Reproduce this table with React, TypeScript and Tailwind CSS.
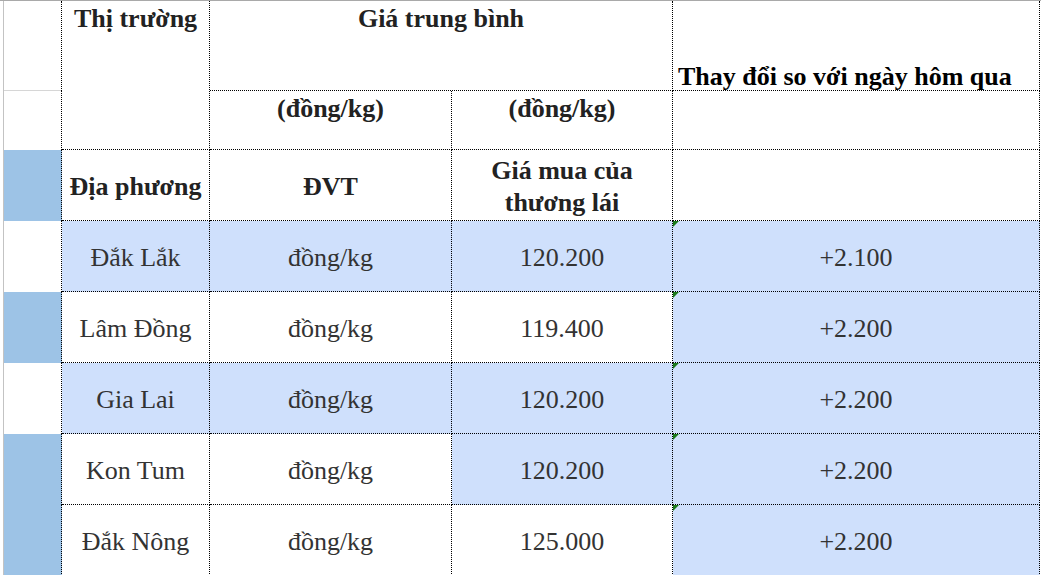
const rows = [
  { name: 'Đắk Lắk', price: '120.200', change: '+2.100', strip: false, hl: [true, true, true] },
  { name: 'Lâm Đồng', price: '119.400', change: '+2.200', strip: true, hl: [false, false, false] },
  { name: 'Gia Lai', price: '120.200', change: '+2.200', strip: false, hl: [true, true, true] },
  { name: 'Kon Tum', price: '120.200', change: '+2.200', strip: true, hl: [false, false, true] },
  { name: 'Đắk Nông', price: '125.000', change: '+2.200', strip: true, hl: [false, false, false] },
];

const cell = 'border-r border-b border-dotted border-black';

export default function App() {
  return (
    <div className="w-[1041px] h-[575px] overflow-hidden bg-white border-t border-[#a9a9a9] flex font-[Liberation_Serif,Times_New_Roman,serif] text-[26px] leading-[32px] text-[#333333]">
      <div className="w-[4px] shrink-0 border-r border-[#c3c3c3]" />
      <div className="grid grid-cols-[58px_148px_242px_221px_367px] grid-rows-[90px_59px_71px_71px_71px_71px_71px_71px]">
        {/* header */}
        <div className="border-r border-dotted border-black flex flex-col">
          <div className="mt-auto h-px bg-[#d6d6d6]" />
        </div>
        <div className={`${cell} row-span-2 flex justify-center pt-[2px] font-bold text-[#222]`}>
          Thị trường
        </div>
        <div className={`${cell} col-span-2 flex justify-center pt-[2px] font-bold text-[#222]`}>
          Giá trung bình
        </div>
        <div className={`${cell} flex items-end pl-[5px] leading-[26px] font-bold text-black`}>
          Thay đổi so với ngày hôm qua
        </div>

        <div className="border-r border-dotted border-black" />
        <div className={`${cell} flex justify-center pt-[2px] font-bold text-[#222]`}>(đồng/kg)</div>
        <div className={`${cell} flex justify-center pt-[2px] font-bold text-[#222]`}>(đồng/kg)</div>
        <div className={cell} />

        <div className="border-r border-dotted border-black bg-[#9dc3e6]" />
        <div className={`${cell} flex items-center justify-center pt-[4px] font-bold text-[#222]`}>Địa phương</div>
        <div className={`${cell} flex items-center justify-center pt-[4px] font-bold text-[#222]`}>ĐVT</div>
        <div className={`${cell} flex items-center justify-center text-center pt-[4px] font-bold text-[#222]`}>
          Giá mua của
          <br />
          thương lái
        </div>
        <div className={cell} />

        {rows.map((r) => (
          <Row key={r.name} {...r} />
        ))}
      </div>
    </div>
  );
}

function Row({
  name,
  price,
  change,
  strip,
  hl,
}: {
  name: string;
  price: string;
  change: string;
  strip: boolean;
  hl: boolean[];
}) {
  const bg = (on: boolean) => (on ? 'bg-[#cfe0fc]' : 'bg-white');
  return (
    <>
      <div className={`border-r border-dotted border-black ${strip ? 'bg-[#9dc3e6]' : 'bg-white'}`} />
      <div className={`${cell} ${bg(hl[0])} flex items-center justify-center pt-[4px]`}>{name}</div>
      <div className={`${cell} ${bg(hl[1])} flex items-center justify-center pt-[4px]`}>đồng/kg</div>
      <div className={`${cell} ${bg(hl[2])} flex items-center justify-center pt-[4px]`}>{price}</div>
      <div className={`${cell} bg-[#cfe0fc] relative flex items-center justify-center pt-[4px]`}>
        <span className="absolute top-0 left-0 w-0 h-0 border-t-[6px] border-t-[#1b7a1b] border-r-[6px] border-r-transparent" />
        {change}
      </div>
    </>
  );
}
